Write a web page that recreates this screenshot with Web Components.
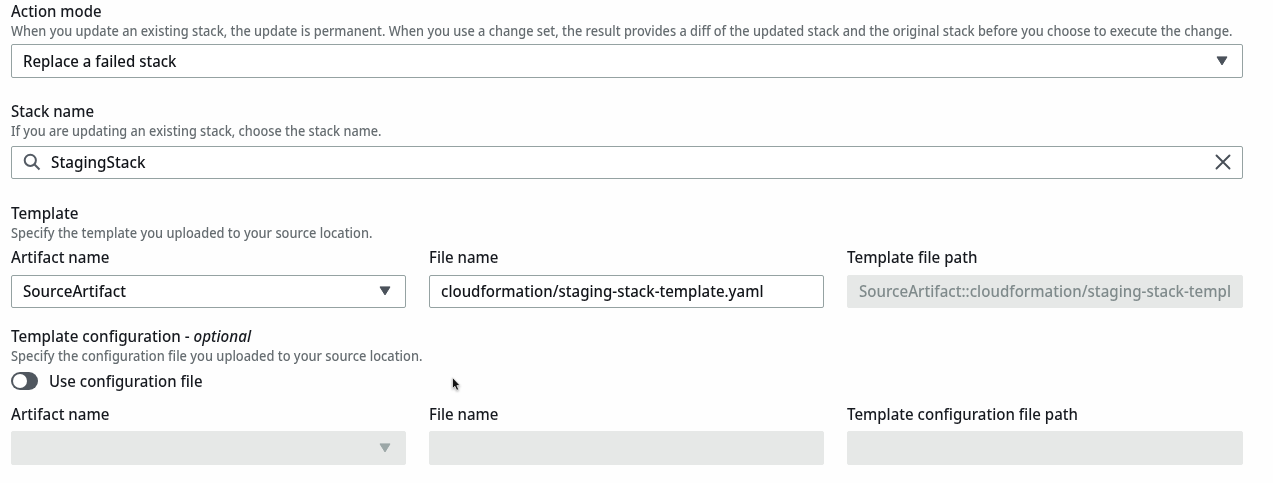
<!DOCTYPE html>
<html lang="en">
<head>
<meta charset="utf-8">
<title>Edit action</title>
<style>
body { margin: 0; background: #fefefe; color: #16191f; font: 500 15.5px/20px "Noto Sans", "Open Sans", sans-serif; height: 483px; overflow: hidden; }
</style>
</head>
<body>
<action-form></action-form>
<script>
const define = (name, html, setup) => customElements.define(name, class extends HTMLElement {
  connectedCallback() {
    if (this.shadowRoot) return;
    const t = document.createElement('template');
    t.innerHTML = html;
    this.attachShadow({ mode: 'open' }).append(t.content.cloneNode(true));
    if (setup) setup(this);
  }
});

// Single line of text condensed to a given width in pixels.
define('fit-text', `<style>
  :host { display: block; white-space: nowrap; width: 0; }
  span { display: inline-block; transform-origin: 0 50%; }
</style><span><slot></slot></span>`, el => {
  const s = el.shadowRoot.querySelector('span');
  s.style.transform = `scaleX(${+el.getAttribute('w') / s.getBoundingClientRect().width})`;
});

define('field-hint', `<style>
  :host { display: block; font-size: 13.5px; font-weight: 500; color: #656c70; height: 20px; }
</style><slot></slot>`);

define('caret-icon', `<style>:host { display: block; flex: none; width: 12px; height: 10px; color: #4b525b; }
  svg { display: block; }</style>
  <svg width="12" height="10" viewBox="0 0 12 10"><path d="M1 .9h10L6 8.9z" fill="currentColor" stroke="currentColor" stroke-width="1" stroke-linejoin="round"/></svg>`);

define('search-icon', `<style>:host { display: block; flex: none; width: 18px; height: 18px; }
  svg { display: block; }</style>
  <svg width="18" height="18" viewBox="0 0 18 18" fill="none" stroke="#545b64" stroke-width="2"><circle cx="7.3" cy="7.3" r="5.6"/><path d="M11.3 11.3l5.2 5.2"/></svg>`);

define('clear-icon', `<style>:host { display: block; flex: none; width: 16px; height: 16px; }
  svg { display: block; }</style>
  <svg width="16" height="16" viewBox="0 0 16 16" fill="none" stroke="#474e57" stroke-width="1.9" stroke-linecap="round"><path d="M1.5 1.5l13 13M14.5 1.5l-13 13"/></svg>`);

define('field-box', `<style>
  :host { display: flex; align-items: center; justify-content: space-between; box-sizing: border-box;
    height: 33px; border: 1px solid #95a2a2; border-radius: 2px; background: #fff; padding: 0 14px 1px 11px; color: #101318; }
  :host([disabled]) { background: #e6e8e7; border-color: #e6e8e7; color: #7f8a8b; }
  :host([tall]) { height: 34px; padding-bottom: 0; }
  .value { display: flex; align-items: center; gap: 10px; }
</style><div class="value"><slot></slot></div><slot name="end"></slot>`, el => {
  el.querySelectorAll('caret-icon').forEach(n => {
    if (el.hasAttribute('disabled')) n.style.color = '#9ba7a7';
  });
});

define('form-field', `<style>
  :host { display: block; }
  .label { height: 20px; }
  .control { margin-top: var(--gap, 3px); }
</style><div class="label"><slot name="label"></slot></div><slot name="hint"></slot><div class="control"><slot></slot></div>`);

define('column-row', `<style>
  :host { display: grid; grid-template-columns: repeat(3, minmax(0, 1fr)); column-gap: 23px; --gap: 8px; }
</style><slot></slot>`);

define('toggle-switch', `<style>
  :host { display: flex; align-items: center; gap: 11px; height: 20px; }
  .track { box-sizing: border-box; width: 27px; height: 18px; padding: 1.7px; border-radius: 9px; background: #50575f; }
  .knob { width: 14.6px; height: 14.6px; border-radius: 50%; background: #fff; }
</style><div class="track"><div class="knob"></div></div><slot></slot>`);

define('mouse-pointer', `<style>
  :host { position: absolute; left: 451px; top: 376px; width: 11px; height: 17px; }
  svg { display: block; filter: drop-shadow(0 1px 1px rgba(0,0,0,.35)); }
</style><svg width="11" height="17" viewBox="0 0 11 17"><path d="M1.5 1.5v11l2.4-2.2 1.8 4 2-.9-1.8-3.8h3.2z" fill="#111" stroke="#fff" stroke-width=".7"/></svg>`);

define('action-form', `<style>
  :host { display: block; box-sizing: border-box; width: 1242.6px; padding: 1px 0 0 11px; }
  .stack { margin-top: 23px; --gap: 5px; }
  .group { margin-top: 24px; }
  .group > fit-text { height: 20px; }
  .first { margin-top: 4px; }
  .config { margin-top: 18px; }
  toggle-switch { margin-top: 5px; }
  .second { margin-top: 13px; --gap: 7px; }
  em { font-style: italic; }
</style>
<form-field>
  <fit-text slot="label" w="90.5">Action mode</fit-text>
  <field-hint slot="hint"><fit-text w="1221.5">When you update an existing stack, the update is permanent. When you use a change set, the result provides a diff of the updated stack and the original stack before you choose to execute the change.</fit-text></field-hint>
  <field-box tall><fit-text w="153.5">Replace a failed stack</fit-text><caret-icon slot="end"></caret-icon></field-box>
</form-field>
<form-field class="stack">
  <fit-text slot="label" w="83">Stack name</fit-text>
  <field-hint slot="hint"><fit-text w="370.5">If you are updating an existing stack, choose the stack name.</fit-text></field-hint>
  <field-box style="padding-right:11px"><search-icon></search-icon><fit-text w="94.5">StagingStack</fit-text><clear-icon slot="end"></clear-icon></field-box>
</form-field>
<div class="group">
  <fit-text w="67.5">Template</fit-text>
  <field-hint><fit-text w="361.5">Specify the template you uploaded to your source location.</fit-text></field-hint>
</div>
<column-row class="first">
  <form-field><fit-text slot="label" w="98.5">Artifact name</fit-text>
    <field-box><fit-text w="103">SourceArtifact</fit-text><caret-icon slot="end"></caret-icon></field-box></form-field>
  <form-field><fit-text slot="label" w="69.5">File name</fit-text>
    <field-box><fit-text w="322.5">cloudformation/staging-stack-template.yaml</fit-text></field-box></form-field>
  <form-field><fit-text slot="label" w="130.5">Template file path</fit-text>
    <field-box disabled><fit-text w="372">SourceArtifact::cloudformation/staging-stack-templ</fit-text></field-box></form-field>
</column-row>
<div class="group config">
  <fit-text w="240">Template configuration - <em>optional</em></fit-text>
  <field-hint><fit-text w="411.5">Specify the configuration file you uploaded to your source location.</fit-text></field-hint>
</div>
<toggle-switch><fit-text w="153.5">Use configuration file</fit-text></toggle-switch>
<column-row class="second">
  <form-field><fit-text slot="label" w="98.5">Artifact name</fit-text>
    <field-box disabled tall><span></span><caret-icon slot="end"></caret-icon></field-box></form-field>
  <form-field><fit-text slot="label" w="69.5">File name</fit-text>
    <field-box disabled tall></field-box></form-field>
  <form-field><fit-text slot="label" w="231">Template configuration file path</fit-text>
    <field-box disabled tall></field-box></form-field>
</column-row>
<mouse-pointer></mouse-pointer>`);
</script>
</body>
</html>
